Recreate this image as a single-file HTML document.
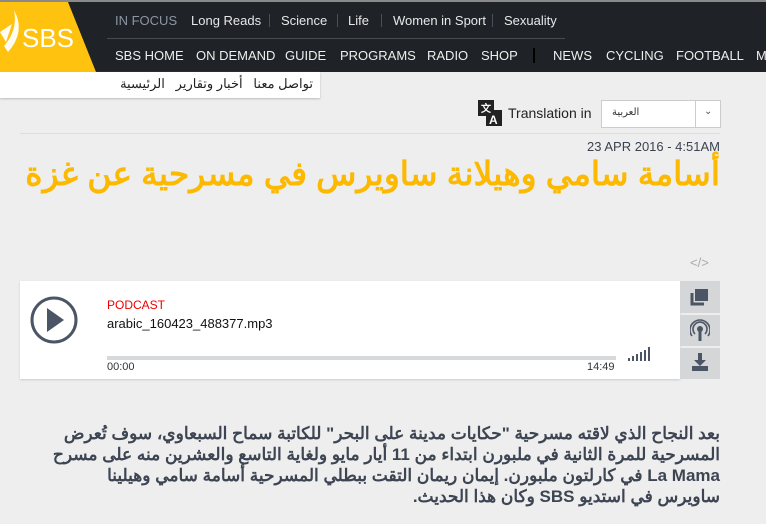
<!DOCTYPE html>
<html><head><meta charset="utf-8"><style>
*{margin:0;padding:0;box-sizing:border-box}
body{width:766px;height:524px;overflow:hidden;background:#eeeeee;font-family:"Liberation Sans",sans-serif;position:relative}
.abs{position:absolute}
.bar{left:0;top:2px;width:766px;height:70px;background:#1f2226}
.top{top:0;left:0;width:766px;height:2px;background:#8a8a8a}
.n1{position:absolute;top:13px;font-size:13px;color:#e8e8e8;white-space:nowrap}
.n2{position:absolute;top:48px;font-size:13px;color:#eeeeee;white-space:nowrap}
.s{position:absolute;top:14px;width:1px;height:13px;background:#4a4f57}
.ar{font-family:"Liberation Sans","Noto Sans CJK SC",sans-serif}
</style></head><body>
<div class="abs top"></div>
<div class="abs bar"></div>
<svg class="abs" style="left:0;top:2px" width="100" height="70"><polygon points="0,0 68,0 96,70 0,70" fill="#ffc20e"/><path d="M0,30 L12,22 L6,40 Z M4,44 Q18,28 14,8 Q26,30 8,50 Z" fill="#fff" opacity=".95"/><text x="22" y="45" font-family="Liberation Sans" font-size="26" fill="#fff">SBS</text></svg>
<span class="n1" style="left:115px;color:#8d96a3">IN FOCUS</span>
<span class="n1" style="left:191px">Long Reads</span><i class="s" style="left:269px"></i>
<span class="n1" style="left:281px">Science</span><i class="s" style="left:337px"></i>
<span class="n1" style="left:348px">Life</span><i class="s" style="left:381px"></i>
<span class="n1" style="left:393px">Women in Sport</span><i class="s" style="left:492px"></i>
<span class="n1" style="left:504px">Sexuality</span>
<div class="abs" style="left:107px;top:38px;width:458px;height:1px;background:#474c54"></div>
<span class="n2" style="left:115px">SBS HOME</span>
<span class="n2" style="left:196px">ON DEMAND</span>
<span class="n2" style="left:285px">GUIDE</span>
<span class="n2" style="left:340px">PROGRAMS</span>
<span class="n2" style="left:427px">RADIO</span>
<span class="n2" style="left:481px">SHOP</span>
<div class="abs" style="left:533px;top:48px;width:2px;height:15px;background:#000"></div>
<span class="n2" style="left:553px">NEWS</span>
<span class="n2" style="left:606px">CYCLING</span>
<span class="n2" style="left:676px">FOOTBALL</span>
<span class="n2" style="left:756px">M</span>
<div class="abs" style="left:0;top:72px;width:320px;height:26px;background:#fff;box-shadow:0 1px 2px #bbb"></div>
<div class="abs ar" dir="rtl" style="right:453px;top:76px;font-size:13px;color:#222;white-space:nowrap">تواصل معنا&nbsp;&nbsp;&nbsp;أخبار وتقارير&nbsp;&nbsp;&nbsp;الرئيسية</div>
<svg class="abs" style="left:478px;top:100px" width="26" height="26"><rect x="0" y="0" width="16" height="16" fill="#222"/><rect x="8" y="10" width="16" height="16" fill="#222"/><text x="3" y="12" font-size="10" fill="#fff" font-weight="bold">文</text><text x="11" y="24" font-size="12" fill="#fff" font-weight="bold" font-family="Liberation Sans">A</text></svg>
<div class="abs" style="left:508px;top:105px;font-size:14px;color:#222">Translation in</div>
<div class="abs" style="left:601px;top:100px;width:120px;height:28px;background:#fff;border:1px solid #ccc"><span class="ar" style="position:absolute;left:10px;top:6px;font-size:10px;color:#333">العربية</span><div style="position:absolute;left:93px;top:0;width:1px;height:26px;background:#ccc"></div><span style="position:absolute;left:102px;top:5px;font-size:10px;color:#555">⌄</span></div>
<div class="abs" style="left:20px;top:133px;width:700px;height:1px;background:#ddd"></div>
<div class="abs" style="right:46px;top:139px;font-size:13px;color:#3b4250">23 APR 2016 - 4:51AM</div>
<div class="abs ar" dir="rtl" style="right:46px;top:154px;font-size:33px;font-weight:bold;color:#fcb900;white-space:nowrap">أسامة سامي وهيلانة ساويرس في مسرحية عن غزة</div>
<div class="abs" style="left:690px;top:255px;font-size:13px;color:#aaa">&lt;/&gt;</div>
<div class="abs" style="left:20px;top:281px;width:660px;height:98px;background:#fff;box-shadow:0 1px 2px #ccc"></div>
<svg class="abs" style="left:29px;top:295px" width="50" height="50"><circle cx="25" cy="25" r="22" fill="none" stroke="#4c5565" stroke-width="3"/><polygon points="18,13 35,25 18,37" fill="#4c5565"/></svg>
<div class="abs" style="left:107px;top:298px;font-size:12px;color:#e00">PODCAST</div>
<div class="abs" style="left:107px;top:316px;font-size:13px;color:#111">arabic_160423_488377.mp3</div>
<div class="abs" style="left:107px;top:356px;width:509px;height:4px;background:#d6d9db"></div>
<div class="abs" style="left:107px;top:361px;font-size:11px;color:#333">00:00</div>
<div class="abs" style="left:587px;top:361px;font-size:11px;color:#333">14:49</div>
<svg class="abs" style="left:628px;top:347px" width="24" height="14"><g fill="#4c5565"><rect x="0" y="11" width="2" height="3"/><rect x="4" y="9" width="2" height="5"/><rect x="8" y="7" width="2" height="7"/><rect x="12" y="5" width="2" height="9"/><rect x="16" y="3" width="2" height="11"/><rect x="20" y="0" width="2" height="14"/></g></svg>
<div class="abs" style="left:680px;top:281px;width:40px;height:32px;background:#d4d6d8"></div>
<div class="abs" style="left:680px;top:315px;width:40px;height:31px;background:#d4d6d8"></div>
<div class="abs" style="left:680px;top:348px;width:40px;height:31px;background:#d4d6d8"></div>
<svg class="abs" style="left:690px;top:287px" width="20" height="20"><rect x="5" y="2" width="13" height="12" fill="#4c5565"/><path d="M2,6 V17 H14" fill="none" stroke="#4c5565" stroke-width="3"/></svg>
<svg class="abs" style="left:690px;top:319px" width="20" height="24"><g fill="none" stroke="#4c5565" stroke-width="1.6"><path d="M5,15 A7,7 0 1 1 15,15"/><path d="M2,17 A10,10 0 1 1 18,17"/></g><circle cx="10" cy="10" r="3" fill="#4c5565"/><rect x="8.5" y="12" width="3" height="10" fill="#4c5565"/></svg>
<svg class="abs" style="left:690px;top:352px" width="20" height="22"><path d="M8,1 H12 V8 H16 L10,14 L4,8 H8 Z" fill="#4c5565"/><rect x="2" y="14" width="16" height="5" fill="#4c5565"/></svg>
<div class="abs ar" dir="rtl" style="left:40px;right:46px;top:423px;font-size:17px;line-height:21px;font-weight:bold;color:#3d4553">بعد النجاح الذي لاقته مسرحية "حكايات مدينة على البحر" للكاتبة سماح السبعاوي، سوف تُعرض المسرحية للمرة الثانية في ملبورن ابتداء من 11 أيار مايو ولغاية التاسع والعشرين منه على مسرح La Mama في كارلتون ملبورن. إيمان ريمان التقت ببطلي المسرحية أسامة سامي وهيلينا ساويرس في استديو SBS وكان هذا الحديث.</div>
</body></html>
